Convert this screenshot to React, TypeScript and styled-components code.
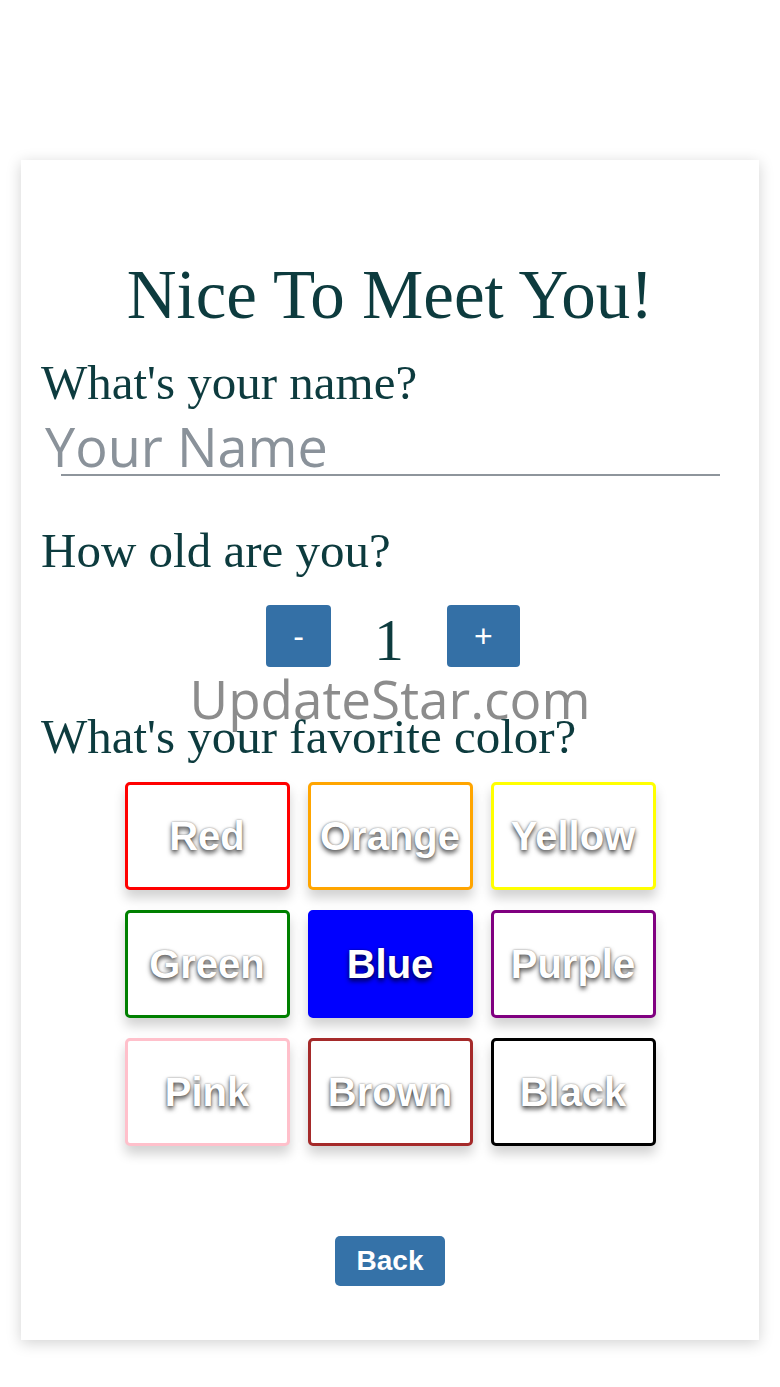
import React, { useState } from "react";
import styled, { createGlobalStyle } from "styled-components";

const GlobalStyle = createGlobalStyle`
  body {
    margin: 0;
    background: #ffffff;
    font-family: "Liberation Serif", serif;
  }
`;

const Page = styled.div`
  padding: 160px 21px 47px 21px;
`;

const Card = styled.div`
  position: relative;
  width: 738px;
  box-sizing: border-box;
  padding: 95px 20px 54px 20px;
  background: #ffffff;
  box-shadow: 0 3px 14px rgba(0, 0, 0, 0.18);
  display: flex;
  flex-direction: column;
`;

const Title = styled.h1`
  margin: 0;
  font-family: "Liberation Serif", serif;
  font-weight: 400;
  font-size: 69px;
  line-height: 80px;
  text-align: center;
  color: #0d3b3e;
`;

const Question = styled.h2<{ $gap: number }>`
  margin: ${({ $gap }) => $gap}px 0 0 0;
  font-family: "Liberation Serif", serif;
  font-weight: 400;
  font-size: 49px;
  line-height: 56px;
  color: #0d3b3e;
`;

const NameInput = styled.input`
  margin: 5px 19px 0 0;
  height: 60px;
  padding: 0 0 0 4px;
  border: none;
  outline: none;
  font-family: "Open Sans", "Liberation Sans", sans-serif;
  font-size: 54px;
  line-height: 60px;
  color: #2b3a44;
  background: linear-gradient(#8e959c, #8e959c) no-repeat 20px 100% /
    calc(100% - 20px) 2px;

  &::placeholder {
    color: #8a929a;
  }
`;

const Stepper = styled.div`
  margin-top: 26px;
  padding-left: 6px;
  display: flex;
  justify-content: center;
  align-items: center;
`;

const StepButton = styled.button`
  height: 62px;
  padding: 0 27px;
  border: none;
  border-radius: 4px;
  background: #3470a6;
  color: #ffffff;
  font-family: "Liberation Sans", sans-serif;
  font-size: 32px;
  cursor: pointer;
`;

const Age = styled.span`
  width: 116px;
  height: 62px;
  text-align: center;
  font-family: "Liberation Serif", serif;
  font-size: 60px;
  line-height: 70px;
  color: #0d3b3e;
`;

const Watermark = styled.div`
  position: absolute;
  top: 513px;
  left: 0;
  right: 0;
  text-align: center;
  font-family: "Open Sans", sans-serif;
  font-size: 53px;
  line-height: 52px;
  color: rgba(128, 128, 128, 0.9);
  pointer-events: none;
`;

const ColorGrid = styled.div`
  margin-top: 17px;
  display: grid;
  grid-template-columns: repeat(3, 165px);
  grid-auto-rows: 108px;
  column-gap: 18px;
  row-gap: 20px;
  justify-content: center;
`;

const Swatch = styled.button<{ $color: string; $active: boolean }>`
  box-sizing: border-box;
  border: 3px solid ${({ $color }) => $color};
  border-radius: 5px;
  background: ${({ $color, $active }) => ($active ? $color : "#ffffff")};
  box-shadow: 0 8px 12px rgba(0, 0, 0, 0.18);
  font-family: "Liberation Sans", sans-serif;
  font-weight: 700;
  font-size: 40px;
  color: #ffffff;
  text-shadow: 0 3px 5px rgba(0, 0, 0, 0.7), 0 0 2px rgba(0, 0, 0, 0.45);
  padding: 0;
  cursor: pointer;
`;

const BackButton = styled.button`
  margin: 90px auto 0 auto;
  width: 110px;
  height: 50px;
  border: none;
  border-radius: 5px;
  background: #3572a8;
  color: #ffffff;
  font-family: "Liberation Sans", sans-serif;
  font-weight: 700;
  font-size: 28px;
  cursor: pointer;
`;

const colors = [
  { name: "Red", value: "#ff0000" },
  { name: "Orange", value: "#ffa500" },
  { name: "Yellow", value: "#ffff00" },
  { name: "Green", value: "#008000" },
  { name: "Blue", value: "#0000ff" },
  { name: "Purple", value: "#800080" },
  { name: "Pink", value: "#ffc0cb" },
  { name: "Brown", value: "#a52a2a" },
  { name: "Black", value: "#000000" },
];

export default function App() {
  const [age, setAge] = useState(1);
  const [favorite, setFavorite] = useState("Blue");

  return (
    <Page>
      <GlobalStyle />
      <Card>
        <Title>Nice To Meet You!</Title>
        <Question $gap={20}>What's your name?</Question>
        <NameInput placeholder="Your Name" />
        <Question $gap={47}>How old are you?</Question>
        <Stepper>
          <StepButton onClick={() => setAge((a) => Math.max(1, a - 1))}>-</StepButton>
          <Age>{age}</Age>
          <StepButton onClick={() => setAge((a) => a + 1)}>+</StepButton>
        </Stepper>
        <Question $gap={42}>What's your favorite color?</Question>
        <ColorGrid>
          {colors.map((c) => (
            <Swatch
              key={c.name}
              $color={c.value}
              $active={favorite === c.name}
              onClick={() => setFavorite(c.name)}
            >
              {c.name}
            </Swatch>
          ))}
        </ColorGrid>
        <BackButton>Back</BackButton>
        <Watermark>UpdateStar.com</Watermark>
      </Card>
    </Page>
  );
}
